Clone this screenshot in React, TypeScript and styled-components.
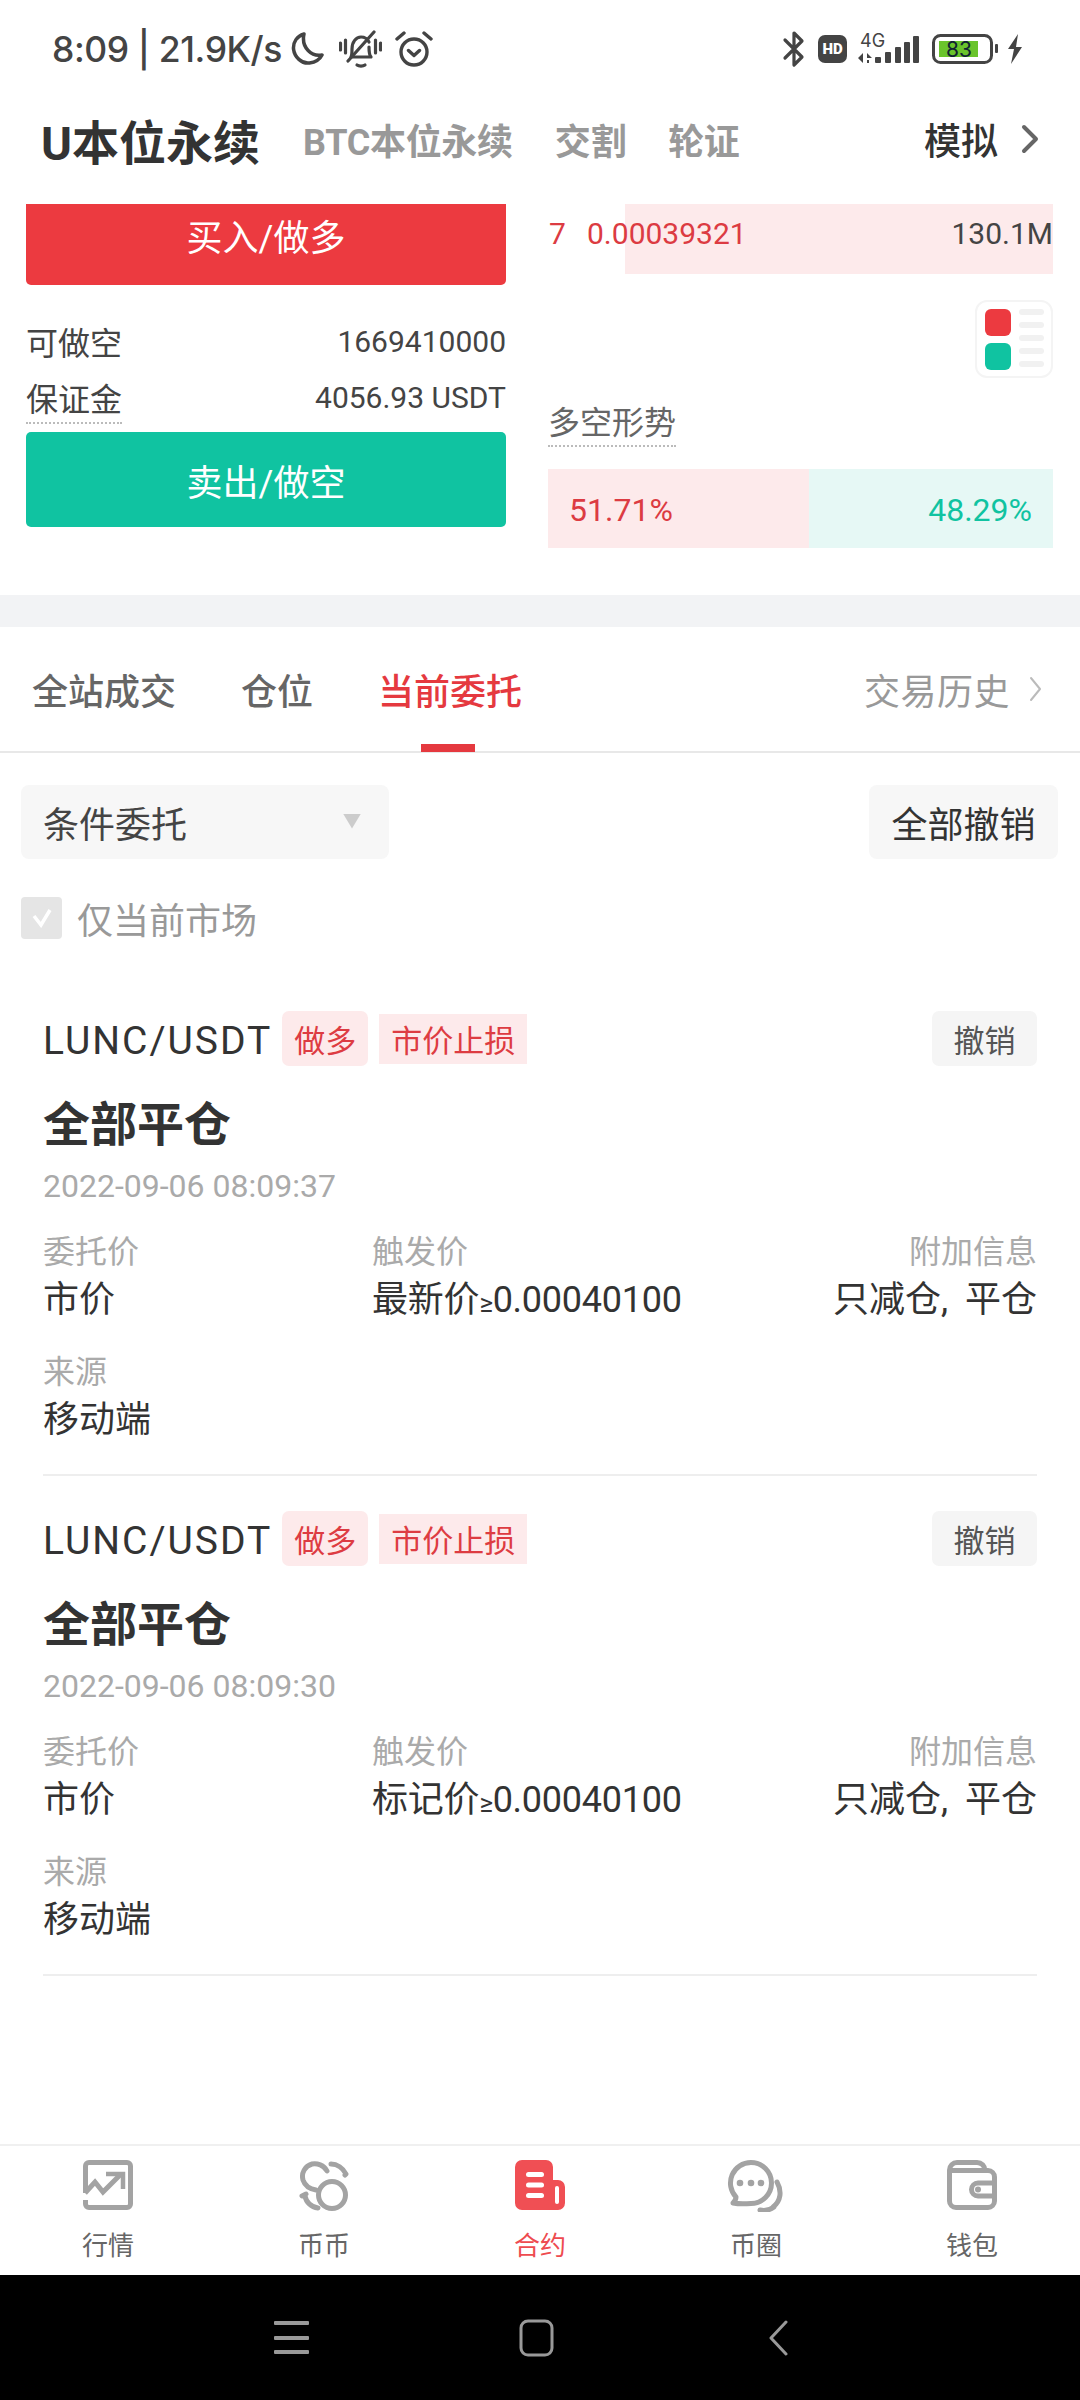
import React from 'react';
import styled, { createGlobalStyle } from 'styled-components';

const RED = '#ec3a40';
const GREEN = '#10c3a1';
const SANS = `Roboto, "Noto Sans CJK SC", sans-serif`;

const GlobalStyle = createGlobalStyle`
  html, body { margin: 0; padding: 0; background: #fff; }
  body { font-family: ${SANS}; }
  * { box-sizing: border-box; }
`;

const Page = styled.div`
  width: 1080px;
  height: 2400px;
  display: flex;
  flex-direction: column;
  overflow: hidden;
  background: #fff;
  color: #333;
`;

const StatusBar = styled.div`
  height: 100px;
  padding: 0 57px 2px 52px;
  display: flex;
  align-items: center;
  justify-content: space-between;
  color: #444;
`;

const StatusGroup = styled.div`
  display: flex;
  align-items: center;
`;

const StatusText = styled.span`
  font-family: Inter, sans-serif;
  font-size: 35.5px;
  font-weight: 500;
  letter-spacing: -0.4px;
  margin-right: 9px;
`;

const NavBar = styled.div`
  height: 104px;
  padding: 2px 40px 28px 41px;
  display: flex;
  align-items: center;
`;

const NavTitle = styled.span`
  font-size: 47px;
  font-weight: 700;
  color: #333;
  margin-right: 43px;
`;

const NavLink = styled.span`
  font-size: 36px;
  font-weight: 700;
  letter-spacing: -0.3px;
  color: #999;
  margin-right: 42px;
`;

const NavRight = styled.span`
  margin-left: auto;
  font-size: 37px;
  font-weight: 500;
  color: #333;
  display: flex;
  align-items: center;
  gap: 22px;
`;

const TradePanel = styled.div`
  height: 391px;
  padding-left: 26px;
  display: flex;
  gap: 42px;
`;

const LeftColumn = styled.div`
  width: 480px;
`;

const RightColumn = styled.div`
  width: 505px;
  display: flex;
  flex-direction: column;
`;

const ActionButton = styled.div<{ $tone: string; $cut?: boolean }>`
  height: ${({ $cut }) => ($cut ? 81 : 95)}px;
  padding-bottom: ${({ $cut }) => ($cut ? 20 : 0)}px;
  background: ${({ $tone }) => $tone};
  border-radius: ${({ $cut }) => ($cut ? '0 0 5px 5px' : '5px')};
  color: #fff;
  font-size: 36px;
  display: flex;
  align-items: center;
  justify-content: center;
`;

const InfoRows = styled.div`
  padding-top: 28px;
  padding-bottom: 7px;
`;

const InfoRow = styled.div`
  height: 56px;
  display: flex;
  align-items: center;
  justify-content: space-between;
  font-size: 32px;
  color: #444;
`;

const InfoValue = styled.span`
  font-size: 30px;
  color: #444;
`;

const DottedLabel = styled.span`
  position: relative;
  &::after {
    content: '';
    position: absolute;
    left: 0;
    right: 0;
    bottom: -4px;
    border-bottom: 2px dotted #bbb;
  }
`;

const BookRow = styled.div`
  position: relative;
  height: 70px;
  padding-bottom: 12px;
  display: flex;
  align-items: center;
  font-size: 30px;
  color: #444;
`;

const DepthBar = styled.div`
  position: absolute;
  top: 0;
  right: 0;
  bottom: 0;
  background: #fdeaeb;
`;

const BookIndex = styled.span`
  position: relative;
  color: #dc3b42;
  width: 39px;
  padding-left: 1px;
`;

const BookPrice = styled.span`
  position: relative;
  color: #dc3b42;
`;

const BookVolume = styled.span`
  position: relative;
  margin-left: auto;
`;

const LayoutSwitch = styled.div`
  align-self: flex-end;
  margin-top: 26px;
  width: 78px;
  height: 78px;
  border: 2px solid #f4f4f4;
  border-radius: 12px;
  padding: 7px 8px;
  display: grid;
  grid-template-columns: 26px 25px;
  column-gap: 8px;
`;

const LayoutBlocks = styled.div`
  display: flex;
  flex-direction: column;
  gap: 7px;
`;

const LayoutBlock = styled.div<{ $tone: string }>`
  width: 26px;
  height: 27px;
  border-radius: 6px;
  background: ${({ $tone }) => $tone};
`;

const LayoutLines = styled.div`
  display: flex;
  flex-direction: column;
  gap: 7px;
`;

const LayoutLine = styled.div`
  width: 25px;
  height: 6px;
  border-radius: 3px;
  background: #f1f1f1;
`;

const TrendLabel = styled.div`
  margin-top: 25px;
  height: 40px;
  line-height: 40px;
  font-size: 32px;
  color: #666;
  display: flex;
`;

const RatioBar = styled.div`
  margin-top: 26px;
  height: 79px;
  display: flex;
  font-size: 32px;
`;

const RatioSide = styled.div<{ $long?: boolean }>`
  display: flex;
  align-items: center;
  width: ${({ $long }) => ($long ? '261px' : '244px')};
  padding: ${({ $long }) => ($long ? '2px 0 0 21px' : '2px 21px 0 0')};
  justify-content: ${({ $long }) => ($long ? 'flex-start' : 'flex-end')};
  background: ${({ $long }) => ($long ? '#fdeaeb' : '#e6f8f5')};
  color: ${({ $long }) => ($long ? '#dc3b42' : GREEN)};
`;

const SectionGap = styled.div`
  height: 32px;
  background: #f2f3f5;
`;

const Tabs = styled.div`
  height: 126px;
  padding: 0 38px 0 32px;
  border-bottom: 2px solid #e8e8e8;
  display: flex;
  align-items: stretch;
  gap: 65px;
`;

const Tab = styled.div<{ $active?: boolean }>`
  position: relative;
  display: flex;
  align-items: center;
  font-size: 36px;
  font-weight: 500;
  color: ${({ $active }) => ($active ? '#e5393f' : '#666')};
`;

const TabMark = styled.div`
  position: absolute;
  left: 43px;
  bottom: -1px;
  width: 54px;
  height: 8px;
  background: #e5393f;
`;

const HistoryLink = styled.div`
  margin-left: auto;
  display: flex;
  align-items: center;
  gap: 19px;
  font-size: 36px;
  letter-spacing: 0.5px;
  color: #999;
`;

const FilterRow = styled.div`
  margin-top: 32px;
  padding: 0 22px 0 21px;
  display: flex;
  justify-content: space-between;
`;

const SelectBox = styled.div`
  width: 368px;
  height: 74px;
  padding: 0 28px 0 22px;
  border-radius: 8px;
  background: #f7f7f7;
  display: flex;
  align-items: center;
  justify-content: space-between;
  font-size: 36px;
  color: #444;
`;

const CaretDown = styled.div`
  width: 18px;
  height: 15px;
  margin-top: -2px;
  background: #ccc;
  clip-path: polygon(0 0, 100% 0, 50% 100%);
`;

const CancelAll = styled.div`
  width: 189px;
  height: 74px;
  border-radius: 8px;
  background: #f7f7f7;
  display: flex;
  align-items: center;
  justify-content: center;
  font-size: 36px;
  color: #333;
`;

const MarketCheck = styled.div`
  margin: 38px 0 72px 21px;
  height: 42px;
  display: flex;
  align-items: center;
  gap: 15px;
  font-size: 36px;
  color: #999;
`;

const CheckBox = styled.div`
  width: 41px;
  height: 42px;
  border-radius: 4px;
  background: #e5e5e5;
  display: flex;
  align-items: center;
  justify-content: center;
`;

const Card = styled.div`
  margin: 0 43px 35px;
  padding-bottom: 29px;
  border-bottom: 2px solid #eee;
`;

const CardHead = styled.div`
  height: 55px;
  display: flex;
  align-items: center;
`;

const Pair = styled.span`
  font-size: 39px;
  letter-spacing: 2px;
  padding-top: 4px;
  color: #333;
  margin-right: 10px;
`;

const Tag = styled.span<{ $round?: boolean }>`
  height: ${({ $round }) => ($round ? 55 : 50)}px;
  padding: 0 12px;
  margin-right: 11px;
  border-radius: ${({ $round }) => ($round ? 7 : 0)}px;
  background: #fdeaeb;
  color: #dd3c42;
  font-size: 31px;
  display: flex;
  align-items: center;
`;

const CancelButton = styled.div`
  margin-left: auto;
  width: 105px;
  height: 55px;
  border-radius: 7px;
  background: #f5f5f5;
  color: #555;
  font-size: 31px;
  display: flex;
  align-items: center;
  justify-content: center;
`;

const CardTitle = styled.div`
  margin-top: 29px;
  font-size: 47px;
  font-weight: 700;
  line-height: 60px;
  color: #333;
`;

const CardDate = styled.div`
  margin-top: 11px;
  font-size: 32px;
  line-height: 40px;
  color: #aaa;
`;

const FieldGrid = styled.div`
  margin-top: 24px;
  display: grid;
  grid-template-columns: 329px 1fr auto;
  row-gap: 22px;
`;

const Field = styled.div<{ $right?: boolean }>`
  text-align: ${({ $right }) => ($right ? 'right' : 'left')};
`;

const FieldLabel = styled.div`
  font-size: 32px;
  line-height: 44px;
  color: #aaa;
`;

const FieldValue = styled.div`
  margin-top: 1px;
  font-size: 36px;
  line-height: 50px;
  word-spacing: 8px;
  color: #333;
`;

const TriggerValue = styled(FieldValue)`
  letter-spacing: -0.25px;
`;

const Comparator = styled.span`
  font-size: 26px;
`;

const Spacer = styled.div`
  flex: 1;
`;

const BottomNav = styled.div`
  height: 131px;
  border-top: 2px solid #f0f0f0;
  padding-top: 14px;
  display: grid;
  grid-template-columns: repeat(5, 216px);
`;

const NavItem = styled.div<{ $active?: boolean }>`
  display: flex;
  flex-direction: column;
  align-items: center;
  font-size: 26px;
  color: ${({ $active }) => ($active ? '#ee4b50' : '#666')};
`;

const NavIcon = styled.svg<{ $wide?: boolean }>`
  width: ${({ $wide }) => ($wide ? 58 : 50)}px;
  height: 52px;
  margin-bottom: 13px;
`;

const SystemBar = styled.div`
  height: 125px;
  background: #000;
  display: flex;
  align-items: center;
  padding-left: 274px;
`;

const SysIcon = styled.svg<{ $gap?: number }>`
  display: block;
  margin-left: ${({ $gap }) => $gap ?? 0}px;
`;

const Moon = () => (
  <SysIcon width="33" height="36" viewBox="0 0 33 36" fill="none" stroke="#444" strokeWidth="3.5" strokeLinecap="round" strokeLinejoin="round">
    <path d="M13 3C6 5 2 11 2.500 18c1 8 8 15 16 14 5-.6 10-3 12.500-8-10 2-21-7-18-21z" />
  </SysIcon>
);

const BellOff = () => (
  <SysIcon $gap={15} width="43" height="38" viewBox="0 0 43 38" fill="none" stroke="#444" strokeWidth="3.2" strokeLinecap="round" strokeLinejoin="round">
    <path d="M1.500 13v7M6.500 10v13M36.500 10v13M41.500 13v7" />
    <path d="M12 27c1-2 1-4 1-8 0-7 4-12 9-12 3 0 6 1 8 5M30 17c0 5 0 8 2 10H12" />
    <path d="M9 31L35 2" />
    <path d="M18 35c2 1.500 6 1.500 8 0" />
  </SysIcon>
);

const Alarm = () => (
  <SysIcon $gap={13} width="38" height="36" viewBox="0 0 38 36" fill="none" stroke="#444" strokeWidth="3.4" strokeLinecap="round" strokeLinejoin="round">
    <circle cx="19" cy="21" r="13" />
    <path d="M13.500 19.500l5.500 5 5.500-5M2 8l7-6M36 8l-7-6" />
  </SysIcon>
);

const Bluetooth = () => (
  <SysIcon width="24" height="38" viewBox="0 0 24 38" fill="none" stroke="#444" strokeWidth="3.2" strokeLinecap="round" strokeLinejoin="round">
    <path d="M3 10l17 17-8 8V3l8 8L3 28" />
  </SysIcon>
);

const HdBadge = () => (
  <SysIcon $gap={12} width="29" height="28" viewBox="0 0 29 28">
    <rect width="29" height="28" rx="7" fill="#444" />
    <text x="14.500" y="19" textAnchor="middle" fontFamily="Roboto, sans-serif" fontWeight="900" fontSize="15" fill="#fff">HD</text>
  </SysIcon>
);

const Signal = () => (
  <SysIcon $gap={10} width="62" height="40" viewBox="0 0 62 40">
    <text x="3" y="18" fontFamily="Inter, sans-serif" fontSize="18" fill="#444">4G</text>
    <g fill="#444">
      <path d="M1 29l5-5v10zM10 24l5 5h-5zM10 31h2v3h-2z" />
      <rect x="18" y="28" width="6" height="6" rx="1" />
      <rect x="28" y="23" width="6" height="11" rx="1" />
      <rect x="38" y="18" width="6" height="16" rx="1" />
      <rect x="47" y="13" width="6" height="21" rx="1" />
      <rect x="56" y="7" width="6" height="27" rx="1" />
    </g>
  </SysIcon>
);

const Battery = () => (
  <SysIcon $gap={13} width="66" height="30" viewBox="0 0 66 30">
    <rect x="1.500" y="1.500" width="58" height="27" rx="7" fill="none" stroke="#444" strokeWidth="3" />
    <rect x="7" y="7" width="39" height="16" fill="#6ac42c" />
    <text x="27" y="23" textAnchor="middle" fontFamily="Inter, sans-serif" fontSize="21" fill="#123">83</text>
    <rect x="63" y="10" width="3" height="9" rx="1" fill="#444" />
  </SysIcon>
);

const Bolt = () => (
  <SysIcon $gap={9} width="16" height="30" viewBox="0 0 16 30">
    <path d="M11 0L1 15h6L4 30l11-17H9z" fill="#444" />
  </SysIcon>
);

const Chevron = ({ w, h, color, sw }: { w: number; h: number; color: string; sw: number }) => (
  <svg width={w} height={h} viewBox={`0 0 ${w} ${h}`} fill="none" stroke={color} strokeWidth={sw} strokeLinecap="round" strokeLinejoin="round">
    <path d={`M${sw} ${sw}L${w - sw} ${h / 2}L${sw} ${h - sw}`} />
  </svg>
);

const ICON_GREY = '#a3a3a3';

const MarketIcon = () => (
  <NavIcon viewBox="0 0 50 52" fill="none" stroke={ICON_GREY}>
    <path d="M2.500 33V6a3.500 3.500 0 0 1 3.500-3.500h38a3.500 3.500 0 0 1 3.500 3.500v38a3.500 3.500 0 0 1-3.500 3.500H6a3.500 3.500 0 0 1-3.500-3.500v-4" strokeWidth="5" />
    <path d="M2 33l10-11 8 10 17-17" strokeWidth="5" />
    <path d="M23 14h17v15" strokeWidth="4.500" />
  </NavIcon>
);

const SpotIcon = () => (
  <NavIcon viewBox="0 0 50 52" fill="none" stroke={ICON_GREY} strokeWidth="5" strokeLinecap="round" strokeLinejoin="round">
    <circle cx="33" cy="35" r="13.500" />
    <path d="M28 11C25 5 18 3 13 4 6 6 2 13 4 20c2 6 7 9 13 10" />
    <path d="M32 4c6 0 12 4 15 10l-1 1" />
    <path d="M3 36l4-2M6 36c1 6 6 11 13 12" />
  </NavIcon>
);

const ContractIcon = () => (
  <NavIcon viewBox="0 0 50 52">
    <path d="M7 0h24a7 7 0 0 1 7 7v13h5a7 7 0 0 1 7 7v16a7 7 0 0 1-7 7H7a7 7 0 0 1-7-7V7a7 7 0 0 1 7-7z" fill="#f04f54" />
    <g fill="#fff">
      <rect x="11" y="12" width="18" height="5" rx="2.500" />
      <rect x="11" y="22.500" width="18" height="5" rx="2.500" />
      <rect x="11" y="33" width="18" height="5" rx="2.500" />
      <rect x="40" y="26" width="4" height="18" rx="2" />
    </g>
  </NavIcon>
);

const ChatIcon = () => (
  <NavIcon $wide viewBox="0 0 58 52" fill="none" stroke={ICON_GREY} strokeWidth="5" strokeLinecap="round" strokeLinejoin="round">
    <path d="M24 2.500A20.500 20.500 0 0 1 24 43.500C18 44 11 44 6 43c2-2 3-4 3-6A20.500 20.500 0 0 1 24 2.500z" />
    <path d="M50 22c5 9 4 19-4 25M33 50c5 1 10 0 14-3" />
    <g fill={ICON_GREY} stroke="none">
      <circle cx="13" cy="23" r="3.300" />
      <circle cx="24" cy="23" r="3.300" />
      <circle cx="34" cy="23" r="3.300" />
    </g>
  </NavIcon>
);

const WalletIcon = () => (
  <NavIcon viewBox="0 0 50 52" fill="none" stroke={ICON_GREY} strokeWidth="5" strokeLinejoin="round">
    <path d="M2.500 10v31a6.500 6.500 0 0 0 6.500 6.500h32a6.500 6.500 0 0 0 6.500-6.500V17a6.500 6.500 0 0 0-6.500-6.500H3" />
    <path d="M2.500 10A7.500 7.500 0 0 1 10 2.500h20a8 8 0 0 1 8 8" />
    <path d="M47 23H31a6.500 6.500 0 0 0 0 13h16" />
    <circle cx="31" cy="29.500" r="3" fill={ICON_GREY} stroke="none" />
  </NavIcon>
);

const NAV_ITEMS = [
  { label: '行情', icon: <MarketIcon /> },
  { label: '币币', icon: <SpotIcon /> },
  { label: '合约', icon: <ContractIcon />, active: true },
  { label: '币圈', icon: <ChatIcon /> },
  { label: '钱包', icon: <WalletIcon /> },
];

const ORDERS = [
  { date: '2022-09-06 08:09:37', triggerType: '最新价' },
  { date: '2022-09-06 08:09:30', triggerType: '标记价' },
];

export default function App() {
  return (
    <Page>
      <GlobalStyle />
      <StatusBar>
        <StatusGroup>
          <StatusText>8:09 | 21.9K/s</StatusText>
          <Moon />
          <BellOff />
          <Alarm />
        </StatusGroup>
        <StatusGroup>
          <Bluetooth />
          <HdBadge />
          <Signal />
          <Battery />
          <Bolt />
        </StatusGroup>
      </StatusBar>

      <NavBar>
        <NavTitle>U本位永续</NavTitle>
        <NavLink>BTC本位永续</NavLink>
        <NavLink>交割</NavLink>
        <NavLink>轮证</NavLink>
        <NavRight>
          模拟
          <Chevron w={20} h={32} color="#666" sw={4} />
        </NavRight>
      </NavBar>

      <TradePanel>
        <LeftColumn>
          <ActionButton $tone={RED} $cut>买入/做多</ActionButton>
          <InfoRows>
            <InfoRow>
              <span>可做空</span>
              <InfoValue>1669410000</InfoValue>
            </InfoRow>
            <InfoRow>
              <DottedLabel>保证金</DottedLabel>
              <InfoValue>4056.93 USDT</InfoValue>
            </InfoRow>
          </InfoRows>
          <ActionButton $tone={GREEN}>卖出/做空</ActionButton>
        </LeftColumn>
        <RightColumn>
          <BookRow>
            <DepthBar style={{ width: 428 }} />
            <BookIndex>7</BookIndex>
            <BookPrice>0.00039321</BookPrice>
            <BookVolume>130.1M</BookVolume>
          </BookRow>
          <LayoutSwitch>
            <LayoutBlocks>
              <LayoutBlock $tone={RED} />
              <LayoutBlock $tone={GREEN} />
            </LayoutBlocks>
            <LayoutLines>
              {[0, 1, 2, 3, 4].map((i) => (
                <LayoutLine key={i} />
              ))}
            </LayoutLines>
          </LayoutSwitch>
          <TrendLabel>
            <DottedLabel>多空形势</DottedLabel>
          </TrendLabel>
          <RatioBar>
            <RatioSide $long>51.71%</RatioSide>
            <RatioSide>48.29%</RatioSide>
          </RatioBar>
        </RightColumn>
      </TradePanel>

      <SectionGap />

      <Tabs>
        <Tab>全站成交</Tab>
        <Tab>仓位</Tab>
        <Tab $active>
          当前委托
          <TabMark />
        </Tab>
        <HistoryLink>
          交易历史
          <Chevron w={13} h={26} color="#bbb" sw={2} />
        </HistoryLink>
      </Tabs>

      <FilterRow>
        <SelectBox>
          条件委托
          <CaretDown />
        </SelectBox>
        <CancelAll>全部撤销</CancelAll>
      </FilterRow>

      <MarketCheck>
        <CheckBox>
          <svg width="22" height="20" viewBox="0 0 22 20" fill="none" stroke="#fff" strokeWidth="3.500">
            <path d="M3 8l7 9 9-15" />
          </svg>
        </CheckBox>
        仅当前市场
      </MarketCheck>

      {ORDERS.map((order) => (
        <Card key={order.date}>
          <CardHead>
            <Pair>LUNC/USDT</Pair>
            <Tag $round>做多</Tag>
            <Tag>市价止损</Tag>
            <CancelButton>撤销</CancelButton>
          </CardHead>
          <CardTitle>全部平仓</CardTitle>
          <CardDate>{order.date}</CardDate>
          <FieldGrid>
            <Field>
              <FieldLabel>委托价</FieldLabel>
              <FieldValue>市价</FieldValue>
            </Field>
            <Field>
              <FieldLabel>触发价</FieldLabel>
              <TriggerValue>
                {order.triggerType}
                <Comparator>≥</Comparator>
                0.00040100
              </TriggerValue>
            </Field>
            <Field $right>
              <FieldLabel>附加信息</FieldLabel>
              <FieldValue>只减仓, 平仓</FieldValue>
            </Field>
            <Field>
              <FieldLabel>来源</FieldLabel>
              <FieldValue>移动端</FieldValue>
            </Field>
          </FieldGrid>
        </Card>
      ))}

      <Spacer />

      <BottomNav>
        {NAV_ITEMS.map((item) => (
          <NavItem key={item.label} $active={item.active}>
            {item.icon}
            {item.label}
          </NavItem>
        ))}
      </BottomNav>

      <SystemBar>
        <SysIcon width="36" height="36" viewBox="0 0 36 36" fill="#999">
          <rect x="0" y="1" width="35" height="4" rx="1" />
          <rect x="0" y="16" width="35" height="4" rx="1" />
          <rect x="0" y="30" width="35" height="4" rx="1" />
        </SysIcon>
        <SysIcon $gap={209} width="36" height="38" viewBox="0 0 36 38" fill="none" stroke="#999" strokeWidth="3">
          <rect x="2" y="2" width="31" height="34" rx="7" />
        </SysIcon>
        <SysIcon $gap={213} width="20" height="36" viewBox="0 0 20 36" fill="none" stroke="#999" strokeWidth="3" strokeLinecap="round" strokeLinejoin="round">
          <path d="M18 2L3 18l15 16" />
        </SysIcon>
      </SystemBar>
    </Page>
  );
}
